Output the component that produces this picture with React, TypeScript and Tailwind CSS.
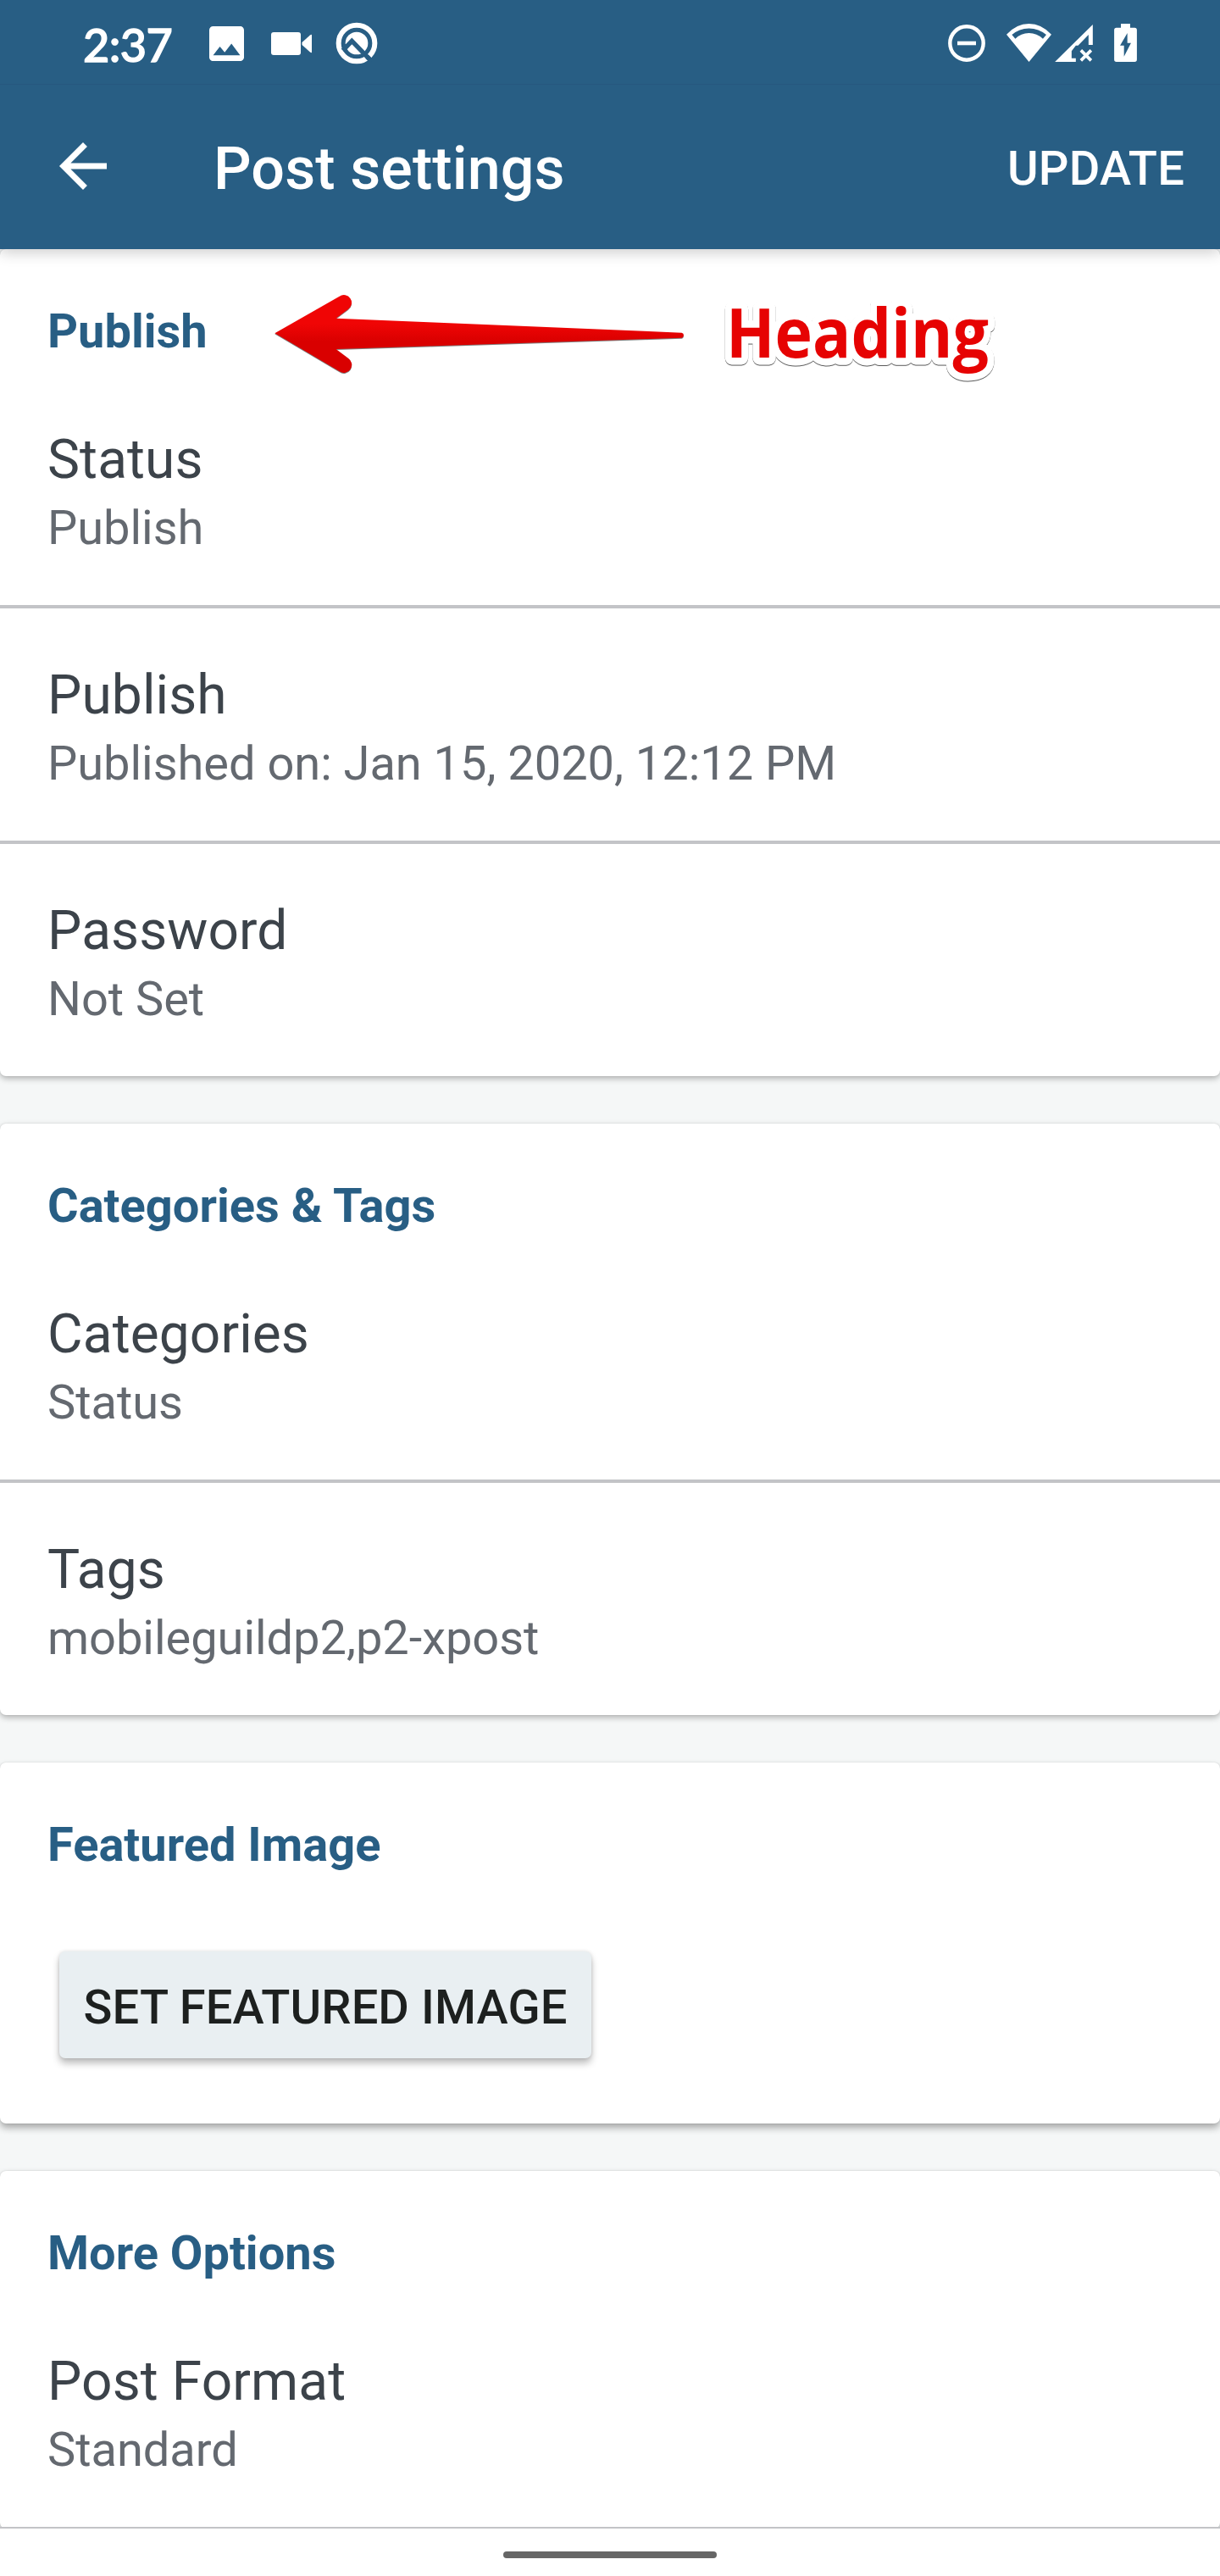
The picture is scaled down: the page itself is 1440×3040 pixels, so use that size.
import type { ReactNode } from "react";

function ImageIcon() {
  return (
    <svg viewBox="3 3 18 18" className="h-[41px] w-[41px]" fill="currentColor">
      <path d="M21 19V5c0-1.1-.9-2-2-2H5c-1.1 0-2 .9-2 2v14c0 1.1.9 2 2 2h14c1.1 0 2-.9 2-2zM8.5 13.5l2.5 3.01L14.5 12l4.5 6H5l3.5-4.5z" />
    </svg>
  );
}

function VideoIcon() {
  return (
    <svg viewBox="0 0 48 27" className="h-[27px] w-[48px]" fill="currentColor">
      <rect width="35" height="27" rx="3" />
      <path d="M36.5 12 46 3.6q2-1.6 2 0v19.800q0 1.600-2 0L36.500 15z" />
    </svg>
  );
}

function AndroidQIcon() {
  return (
    <svg viewBox="0 0 150 150" className="h-[50px] w-[50px]" fill="none">
      <circle cx="75" cy="75" r="64" stroke="white" strokeWidth="18" />
      <circle cx="75" cy="75" r="40" fill="white" />
      <path d="M26 101 58 67 122 133" stroke="#285e84" strokeWidth="16" />
      <path d="M22 81 36 78 38 98 30 106z" fill="#285e84" />
      <path d="M112 123 128 139" stroke="#285e84" strokeWidth="16" />
    </svg>
  );
}

function DoNotDisturbIcon() {
  return (
    <svg viewBox="0 0 44 44" className="h-[44px] w-[44px]" fill="none" stroke="white">
      <circle cx="22" cy="22" r="19.700" strokeWidth="4.400" />
      <path d="M11 22h22" strokeWidth="4.600" />
    </svg>
  );
}

function WifiIcon() {
  return (
    <svg viewBox="324 54 158 134" className="h-[45px] w-[53px]" fill="white" fillRule="evenodd">
      <path d="M403 188 324 92Q359 54 403 54T482 92ZM343 93 355 107Q375 87 403 87T452 107L464 93Q438 70 403 70T343 93Z" />
    </svg>
  );
}

function SignalIcon() {
  return (
    <svg viewBox="496 56 134 132" className="h-[44px] w-[45px]" fill="white">
      <path d="M496 188 630 56V128H615V92L578 130H570L555 150V175H570V188Z" />
      <path d="M588 147 624 183M624 147 588 183" stroke="white" strokeWidth="11" />
    </svg>
  );
}

function BatteryIcon() {
  return (
    <svg viewBox="705 55 81 136" className="h-[45px] w-[27px]" fill="white" fillRule="evenodd">
      <path d="M729 55H762V69H778Q786 69 786 77V183Q786 191 778 191H713Q705 191 705 183V77Q705 69 713 69H729ZM752 88 726 133H740V172L765 124H752Z" />
    </svg>
  );
}

function BackIcon() {
  return (
    <svg viewBox="0 0 24 24" className="h-[84px] w-[84px]" fill="currentColor">
      <path d="M20 11H7.830l5.590-5.590L12 4l-8 8 8 8 1.410-1.410L7.830 13H20v-2z" />
    </svg>
  );
}

function Annotation() {
  return (
    <>
      <svg viewBox="0 0 1530 390" className="absolute left-[310px] top-[36px] h-[130px] w-[510px]">
        <defs>
          <linearGradient id="arrow" gradientUnits="userSpaceOnUse" x1="0" y1="130" x2="0" y2="235">
            <stop offset="0.25" stopColor="#f00505" />
            <stop offset="0.85" stopColor="#d90000" />
          </linearGradient>
        </defs>
        <path
          d="M43 190 272 59A27 27 0 0 1 303 105L260 137 1484 188Q1491 190 1491 197 1490 205 1484 206L260 246 303 278A27 27 0 0 1 272 325Z"
          fill="url(#arrow)"
          className="drop-shadow-[0_3px_1px_rgba(0,0,0,0.5)]"
        />
      </svg>
      <svg viewBox="0 0 400 140" className="absolute left-[820px] top-[36px] h-[140px] w-[400px]">
        <text
          x="37"
          y="92"
          textLength="310"
          lengthAdjust="spacingAndGlyphs"
          fill="#e60303"
          stroke="white"
          strokeWidth="17"
          strokeLinejoin="round"
          paintOrder="stroke"
          className="font-['Open_Sans'] text-[80px] font-bold drop-shadow-[0_1px_0.5px_rgba(0,0,0,0.65)]"
        >
          Heading
        </text>
      </svg>
    </>
  );
}

function Card({ title, shadow, children }: { title: string; shadow: string; children: ReactNode }) {
  return (
    <section className={`relative rounded-[7px] bg-white ${shadow}`}>
      <h2 className="h-[146px] px-[56px] pt-[65px] text-[56px] leading-[64px] font-bold text-[#285e84]">
        {title}
      </h2>
      {children}
    </section>
  );
}

function Row({ title, value }: { title: string; value: string }) {
  return (
    <div className="h-[274px] px-[56px] pt-[63px]">
      <div className="text-[64px] leading-[80px] tracking-[0.1px] text-[#3c434a]">{title}</div>
      <div className="text-[56px] leading-[80px] tracking-[-0.04px] text-[#646970]">{value}</div>
    </div>
  );
}

const Divider = () => <div className="h-[4px] bg-[#c3c4c7]" />;

const low = "shadow-[0_3px_7px_rgba(0,0,0,0.28),0_0_2px_rgba(0,0,0,0.12)]";
const high = "shadow-[0_5px_9px_rgba(0,0,0,0.32),0_0_2px_rgba(0,0,0,0.12)]";

export default function App() {
  return (
    <div className="flex h-[3040px] w-[1440px] flex-col overflow-hidden bg-[#f5f7f7] font-['Roboto',sans-serif]">
      <header className="relative z-10 bg-[#285e84] text-white shadow-[0_4px_16px_rgba(0,0,0,0.2)]">
        <div className="flex h-[100px] items-start justify-between border-b border-[#27587f] pr-[98px] pl-[98px]">
          <div className="flex h-[102px] items-center">
            <span className="w-[149px] pt-[3px] font-['Lato',sans-serif] text-[54px] leading-[64px] font-medium tracking-[-0.6px] [-webkit-text-stroke:1.4px_white]">
              2:37
            </span>
            <ImageIcon />
            <div className="ml-[32px]">
              <VideoIcon />
            </div>
            <div className="ml-[28px]">
              <AndroidQIcon />
            </div>
          </div>
          <div className="flex h-[101px] items-center">
            <DoNotDisturbIcon />
            <div className="ml-[25px]">
              <WifiIcon />
            </div>
            <div className="ml-[4px]">
              <SignalIcon />
            </div>
            <div className="ml-[25px]">
              <BatteryIcon />
            </div>
          </div>
        </div>
        <div className="flex h-[194px] items-center pr-[42px] pb-[2px] pl-[56px]">
          <BackIcon />
          <h1 className="ml-[112px] flex-1 pt-[6px] text-[70px] leading-[84px] font-medium tracking-[0.1px]">
            Post settings
          </h1>
          <button className="pt-[6px] text-[56px] leading-[84px] font-medium tracking-[0.2px]">UPDATE</button>
        </div>
      </header>

      <main className="flex flex-col gap-[56px]">
        <Card title="Publish" shadow={low}>
          <Annotation />
          <Row title="Status" value="Publish" />
          <Divider />
          <Row title="Publish" value="Published on: Jan 15, 2020, 12:12 PM" />
          <Divider />
          <Row title="Password" value="Not Set" />
        </Card>
        <Card title="Categories &amp; Tags" shadow={low}>
          <Row title="Categories" value="Status" />
          <Divider />
          <Row title="Tags" value="mobileguildp2,p2-xpost" />
        </Card>
        <Card title="Featured Image" shadow={high}>
          <div className="h-[280px] px-[70px] pt-[77px]">
            <button className="h-[126px] w-[628px] rounded-[7px] bg-[#e9eff2] pt-[6px] text-center text-[56px] leading-[120px] font-medium tracking-[0.1px] text-[#1d201f] shadow-[0_6px_9px_rgba(0,0,0,0.26),0_0_4px_rgba(0,0,0,0.12)]">
              SET FEATURED IMAGE
            </button>
          </div>
        </Card>
        <Card title="More Options" shadow={low}>
          <Row title="Post Format" value="Standard" />
          <div className="h-[2px] bg-[#c3c4c7]" />
        </Card>
      </main>

      <nav className="relative flex h-[56px] shrink-0 justify-center bg-white pt-[27px]">
        <div className="h-[8px] w-[252px] rounded-full bg-[#666666]" />
      </nav>
    </div>
  );
}
